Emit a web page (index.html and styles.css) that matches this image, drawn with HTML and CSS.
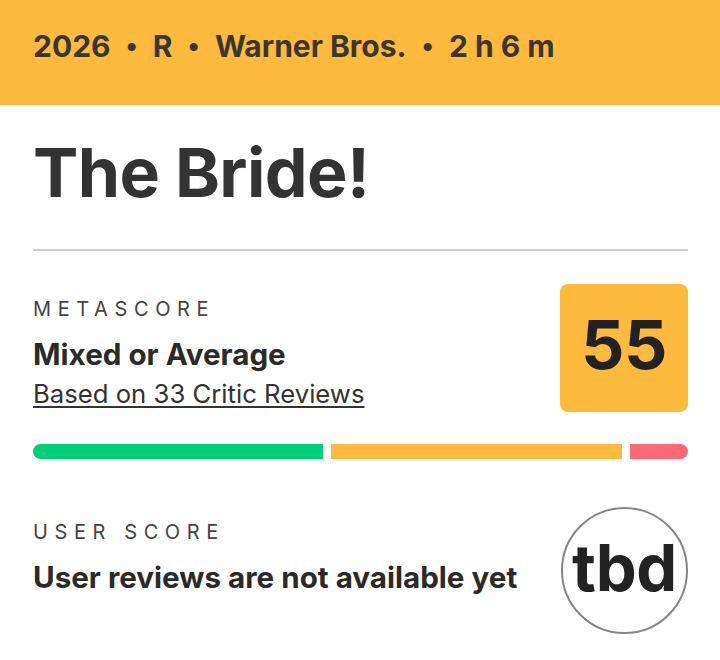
FILE: index.html
```html
<!DOCTYPE html>
<html lang="en">
  <head>
    <meta charset="UTF-8" />
    <meta name="viewport" content="width=device-width, initial-scale=1.0" />
    <title>The Bride!</title>
    <link rel="stylesheet" href="styles.css">
  </head>
  <body>
    <div class="movie-card">
      <div class="meta-bar">
        <span>2026</span>
        <span class="dot">&bull;</span>
        <span>R</span>
        <span class="dot">&bull;</span>
        <span>Warner Bros.</span>
        <span class="dot">&bull;</span>
        <span>2 h 6 m</span>
      </div>
      <div class="card-body">
        <h1 class="movie-title">The Bride!</h1>
        <div class="divider"></div>

        <div class="score-row critic-row">
          <div class="score-text">
            <div class="score-label">METASCORE</div>
            <div class="score-verdict">Mixed or Average</div>
            <a class="score-link" href="#">Based on 33 Critic Reviews</a>
          </div>
          <div class="metascore-box">55</div>
        </div>

        <div class="review-bar">
          <div class="bar-part positive"></div>
          <div class="bar-part mixed"></div>
          <div class="bar-part negative"></div>
        </div>

        <div class="score-row user-row">
          <div class="score-text">
            <div class="score-label">USER SCORE</div>
            <div class="score-verdict">User reviews are not available yet</div>
          </div>
          <div class="userscore-circle">tbd</div>
        </div>
      </div>
    </div>
  </body>
</html>
```

FILE: styles.css
```css
body {
  margin: 0;
  background: #fff;
  font-family: Inter, Lato, "Liberation Sans", sans-serif;
  color: #333;
}

.movie-card {
  width: 720px;
}

.meta-bar {
  display: flex;
  align-items: center;
  height: 105px;
  box-sizing: border-box;
  padding: 0 0 14px 33px;
  background-color: #fdba3d;
  font-size: 30px;
  font-weight: 700;
  color: #393633;
}
.meta-bar .dot {
  font-size: 26px;
  margin: 0 15px;
}

.card-body {
  padding: 0 32px 0 33px;
}

.movie-title {
  font-size: 68px;
  font-weight: 700;
  line-height: 1;
  margin: 0;
  padding-top: 33px;
  letter-spacing: -0.6px;
  color: #333;
}

.divider {
  height: 2px;
  background-color: #cfcfcf;
  margin-top: 43px;
}

.score-row {
  display: flex;
  justify-content: space-between;
  align-items: flex-start;
}
.critic-row {
  margin-top: 33px;
}
.user-row {
  margin-top: 48px;
}

.score-text {
  padding-top: 13px;
}

.score-label {
  font-size: 20px;
  font-weight: 400;
  letter-spacing: 6.6px;
  color: #444;
  line-height: 24px;
}

.score-verdict {
  font-size: 29.6px;
  font-weight: 700;
  color: #2a2a2a;
  margin-top: 15px;
  line-height: 36px;
}

.score-link {
  display: inline-block;
  font-size: 25.7px;
  line-height: 31px;
  color: #333;
  margin-top: 6px;
  text-decoration: underline;
  text-decoration-thickness: 2px;
  text-underline-offset: 3px;
}

.metascore-box {
  width: 128px;
  height: 128px;
  box-sizing: border-box;
  padding-bottom: 8px;
  border-radius: 8px;
  background-color: #fdba3d;
  display: flex;
  align-items: center;
  justify-content: center;
  font-size: 68px;
  font-weight: 700;
  color: #222;
  letter-spacing: -0.5px;
}

.review-bar {
  display: flex;
  gap: 8px;
  height: 15px;
  margin-top: 32px;
}
.bar-part {
  height: 100%;
}
.positive {
  flex: 290;
  background-color: #00ce7a;
  border-radius: 8px 0 0 8px;
}
.mixed {
  flex: 291;
  background-color: #fdba3d;
}
.negative {
  flex: 58;
  background-color: #ff6874;
  border-radius: 0 8px 8px 0;
}

.userscore-circle {
  width: 127px;
  height: 127px;
  box-sizing: border-box;
  border: 2px solid #858585;
  border-radius: 50%;
  display: flex;
  align-items: center;
  justify-content: center;
  font-size: 65px;
  font-weight: 700;
  color: #222;
  letter-spacing: -0.3px;
  padding-bottom: 6px;
}
```
